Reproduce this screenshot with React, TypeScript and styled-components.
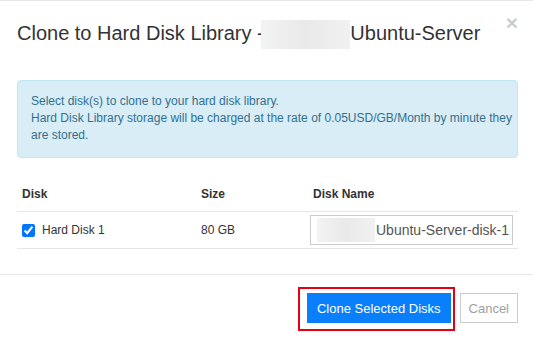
import React from 'react'
import styled, { createGlobalStyle } from 'styled-components'

const GlobalStyle = createGlobalStyle`
  html, body {
    margin: 0;
    padding: 0;
    background: #ffffff;
  }
  body {
    font-family: 'Liberation Sans', Arial, Helvetica, sans-serif;
    color: #333333;
  }
`

const Modal = styled.div`
  width: 533px;
  height: 338px;
  box-sizing: border-box;
  border-top: 1px solid #e8e8e8;
  display: flex;
  flex-direction: column;
  overflow: hidden;
`

const Header = styled.div`
  display: flex;
  align-items: flex-start;
  padding: 20px 15px 20px 17px;
`

const Title = styled.h4`
  margin: 0;
  height: 24px;
  font-size: 20px;
  line-height: 24px;
  font-weight: normal;
  color: #333333;
  white-space: nowrap;
`

const Redacted = styled.span<{ w: number; h: number }>`
  display: inline-block;
  width: ${props => props.w}px;
  height: ${props => props.h}px;
  background: linear-gradient(90deg, #f3f3f3 0%, #e9e9e9 50%, #f1f1f1 100%);
`

const TitleRedaction = styled(Redacted)`
  vertical-align: middle;
  margin: -6px 0 -6px -8px;
`

const CloseButton = styled.button`
  margin: -9px 0 0 auto;
  padding: 0;
  border: 0;
  background: none;
  font-family: 'Liberation Sans', Arial, sans-serif;
  font-size: 21px;
  font-weight: bold;
  line-height: 1;
  color: #000;
  opacity: 0.2;
  cursor: pointer;
`

const Body = styled.div`
  padding: 15px 15px 0 17px;
`

const Alert = styled.div`
  border: 1px solid #bce8f1;
  border-radius: 4px;
  background: #d9edf7;
  color: #31708f;
  font-size: 12px;
  line-height: 17px;
  padding: 12px 3px 13px 13px;
  margin-bottom: 20px;
`

const Table = styled.table`
  width: 501px;
  border-collapse: collapse;
  table-layout: fixed;
  font-size: 12px;
  line-height: 17px;
  margin-bottom: 25px;
`

const HeadCell = styled.th`
  text-align: left;
  font-weight: bold;
  padding: 8px 5px;
  border-bottom: 1px solid #e6e6e6;
  color: #333;
`

const Cell = styled.td<{ tight?: boolean }>`
  padding: ${props => (props.tight ? '3px 5px 3px 2px' : '3px 5px')};
  border-bottom: 1px solid #e6e6e6;
  vertical-align: middle;
  color: #333;
`

const DiskLabel = styled.label`
  display: flex;
  align-items: center;
`

const Check = styled.input`
  width: 13px;
  height: 13px;
  margin: 0 7px 0 0;
  accent-color: #0075ff;
`

const Field = styled.div`
  position: relative;
`

const TextInput = styled.input`
  display: block;
  width: 100%;
  height: 30px;
  box-sizing: border-box;
  border: 1px solid #cccccc;
  border-radius: 0;
  padding: 0 3px 0 65px;
  font-family: 'Liberation Sans', Arial, sans-serif;
  font-size: 14px;
  color: #555555;
  outline: none;
`

const FieldRedaction = styled(Redacted)`
  position: absolute;
  left: 7px;
  top: 3px;
`

const Footer = styled.div`
  border-top: 1px solid #e6e6e6;
  padding: 18px 15px 15px;
  display: flex;
  justify-content: flex-end;
  gap: 9px;
`

const Highlight = styled.span`
  position: relative;
  display: inline-flex;

  &::after {
    content: '';
    position: absolute;
    top: -6px;
    left: -9px;
    right: -4px;
    bottom: -8px;
    border: 2px solid #e60012;
    pointer-events: none;
  }
`

const Button = styled.button<{ primary?: boolean }>`
  height: 30px;
  box-sizing: border-box;
  padding: 0 ${props => (props.primary ? '9px' : '8px')};
  border: 1px solid ${props => (props.primary ? '#0a7ffb' : '#cccccc')};
  background: ${props => (props.primary ? '#0a7ffb' : '#ffffff')};
  color: ${props => (props.primary ? '#ffffff' : '#a0a0a0')};
  font-family: 'Liberation Sans', Arial, sans-serif;
  font-size: 13px;
  border-radius: 0;
  cursor: pointer;
`

export default function App() {
  return (
    <>
      <GlobalStyle />
      <Modal>
        <Header>
          <Title>
            Clone to Hard Disk Library - <TitleRedaction w={89} h={29} />
            Ubuntu-Server
          </Title>
          <CloseButton aria-label="Close">×</CloseButton>
        </Header>
        <Body>
          <Alert>
            Select disk(s) to clone to your hard disk library.
            <br />
            Hard Disk Library storage will be charged at the rate of 0.05USD/GB/Month by minute they are
            stored.
          </Alert>
          <Table>
            <colgroup>
              <col style={{ width: 179 }} />
              <col style={{ width: 112 }} />
              <col />
            </colgroup>
            <thead>
              <tr>
                <HeadCell>Disk</HeadCell>
                <HeadCell>Size</HeadCell>
                <HeadCell>Disk Name</HeadCell>
              </tr>
            </thead>
            <tbody>
              <tr>
                <Cell>
                  <DiskLabel>
                    <Check type="checkbox" defaultChecked />
                    Hard Disk 1
                  </DiskLabel>
                </Cell>
                <Cell>80 GB</Cell>
                <Cell tight>
                  <Field>
                    <TextInput defaultValue="Ubuntu-Server-disk-1" />
                    <FieldRedaction w={58} h={24} />
                  </Field>
                </Cell>
              </tr>
            </tbody>
          </Table>
        </Body>
        <Footer>
          <Highlight>
            <Button primary>Clone Selected Disks</Button>
          </Highlight>
          <Button>Cancel</Button>
        </Footer>
      </Modal>
    </>
  )
}
